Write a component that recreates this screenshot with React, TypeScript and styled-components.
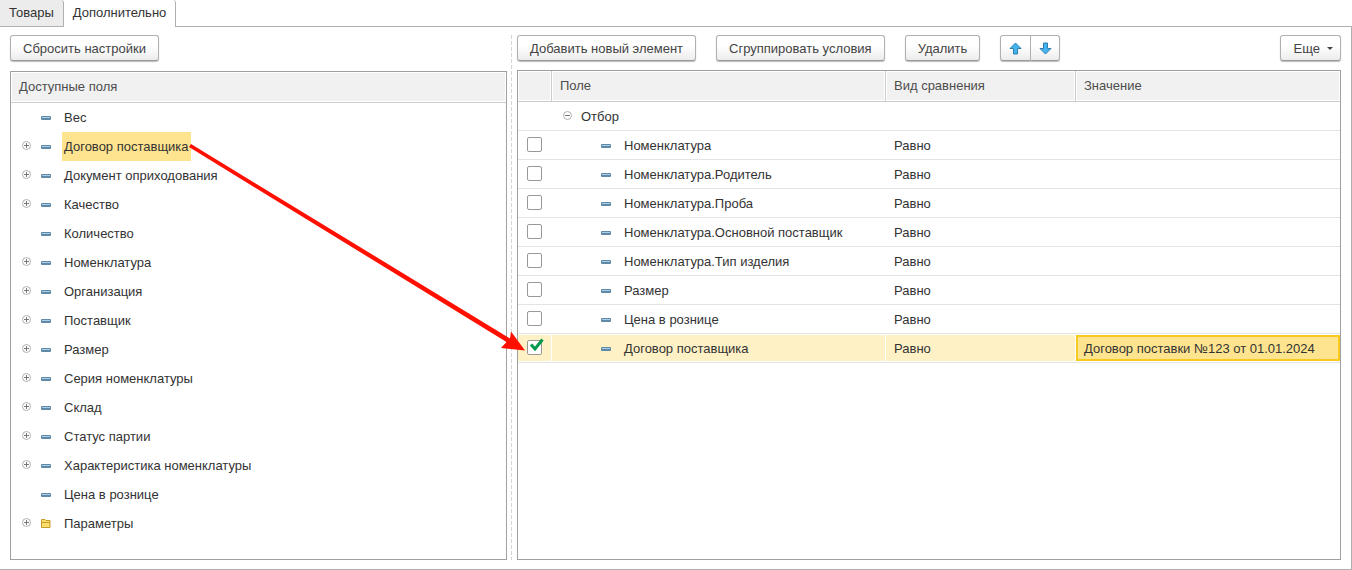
import React, { useState } from "react";
import styled, { createGlobalStyle, css } from "styled-components";

const GlobalStyle = createGlobalStyle`
  *, *::before, *::after { box-sizing: border-box; }
  body { margin: 0; background: #fff; }
  body, button, input, table {
    font-family: "Liberation Sans", Arial, sans-serif;
    font-size: 13px;
    color: #333;
  }
`;

const Page = styled.div`
  min-height: 100vh;
  display: flex;
  flex-direction: column;
`;

const TabBar = styled.div`
  display: flex;
  height: 27px;
  box-shadow: inset 0 -1px #b0b0b0;
`;

const Tab = styled.button<{ $active?: boolean }>`
  height: 27px;
  padding: 0 9px 2px;
  border: 0 solid #b0b0b0;
  border-right-width: 1px;
  border-bottom-width: ${(p) => (p.$active ? 0 : 1)}px;
  border-top-right-radius: 3px;
  background: ${(p) => (p.$active ? "#fff" : "#ececec")};
`;

const Content = styled.main`
  position: relative;
  flex: 1;
  display: grid;
  grid-template-columns: 497fr 10px 824fr;
  padding: 8px 10px 9px;
  border: solid #b0b0b0;
  border-width: 0 1px 1px 0;
`;

const Pane = styled.section<{ $gap: number }>`
  display: flex;
  flex-direction: column;
  gap: ${(p) => p.$gap}px;
  min-width: 0;
`;

const Splitter = styled.div`
  width: 1px;
  margin-left: 4px;
  background: repeating-linear-gradient(#d4d4d4 0 4px, transparent 4px 6px);
`;

const Toolbar = styled.div`
  display: flex;
  gap: 20px;
`;

const Button = styled.button`
  height: 26px;
  padding: 0 12px;
  border: 1px solid #b0b0b0;
  border-bottom-color: #999;
  border-radius: 3px;
  background: linear-gradient(#fff 40%, #ececec);
  box-shadow: 0 1px 1px #bbb;
  color: #444;
  white-space: nowrap;
`;

const MoreButton = styled(Button)`
  display: flex;
  align-items: center;
  gap: 7px;
  margin-left: auto;
  padding: 0 7px 0 13px;
`;

const ButtonGroup = styled.div`
  display: flex;
`;

const IconButton = styled(Button)`
  display: grid;
  place-items: center;
  padding: 0;
  &:first-child { width: 31px; border-radius: 3px 0 0 3px; }
  &:last-child { width: 29px; border-left: 0; border-radius: 0 3px 3px 0; }
`;

const Box = styled.div`
  flex: 1;
  border: 1px solid #a0a0a0;
`;

const headerLook = css`
  height: 31px;
  padding: 0 8px;
  border-bottom: 1px solid #ccc;
  background: #f1f1f1;
  box-shadow: inset 0 0 0 1px #fff;
  color: #4d4d4d;
  font-weight: normal;
  text-align: left;
`;

const ListHeader = styled.div`
  ${headerLook}
  line-height: 30px;
`;

const FieldList = styled.ul`
  margin: 0;
  padding: 0;
  list-style: none;
`;

const FieldRow = styled.li`
  display: grid;
  grid-template-columns: 20px 21px 1fr;
  align-items: center;
  height: 29px;
  padding-left: 10px;
`;

const FieldName = styled.span<{ $selected?: boolean }>`
  justify-self: start;
  height: 29px;
  padding: 0 2px;
  line-height: 29px;
  background: ${(p) => (p.$selected ? "#ffe48f" : "transparent")};
`;

const Table = styled.table`
  width: 100%;
  table-layout: fixed;
  border-collapse: separate;
  border-spacing: 0;
`;

const Th = styled.th`
  ${headerLook}
  padding-bottom: 2px;
  &:not(:last-child) { border-right: 1px solid #ccc; }
`;

const Td = styled.td`
  height: 29px;
  padding: 0 8px;
  border-bottom: 1px solid #e4e4e4;
  white-space: nowrap;
`;

const Tr = styled.tr<{ $selected?: boolean }>`
  ${(p) =>
    p.$selected &&
    css`
      ${Td} {
        background: #fff1c6;
        box-shadow: inset 0 1px #fff, inset 0 -1px #fff, inset -1px 0 #fff;
      }
    `}
`;

const ValueTd = styled(Td)<{ $active?: boolean }>`
  ${(p) => p.$active && css`padding: 1px 0;`}
`;

const ActiveValue = styled.div`
  height: 26px;
  padding: 0 6px;
  border: 2px solid #f9ca1e;
  background: #ffe48f;
  line-height: 24px;
`;

const Item = styled.div<{ $group?: boolean }>`
  display: flex;
  align-items: center;
  gap: ${(p) => (p.$group ? 8 : 13)}px;
  padding-left: ${(p) => (p.$group ? 2 : 41)}px;
`;

const Check = styled.input`
  appearance: none;
  display: block;
  width: 15px;
  height: 15px;
  margin: 0 0 2px 1px;
  border: 1px solid #999;
  border-radius: 2px;
  background: #fff;
`;

const CheckBoxWrap = styled.div`
  position: relative;
`;

const CheckMark = styled.svg`
  position: absolute;
  left: 3px;
  top: -2px;
  pointer-events: none;
`;

const Arrow = styled.svg`
  position: absolute;
  left: 180px;
  top: 110px;
  pointer-events: none;
`;

const Toggle = ({ open }: { open?: boolean }) => (
  <svg width="11" height="13" viewBox="0 0 11 13" fill="none" stroke="#b0b0b0">
    <circle cx="5.5" cy="5.5" r="4" />
    <path d={open ? "M3 5.5h5" : "M3 5.5h5M5.5 3v5"} stroke="#777" />
  </svg>
);

const Dash = () => (
  <svg width="10" height="5" viewBox="0 0 10 5">
    <rect y="1" width="10" height="4" rx="1" fill="#6089a8" />
    <rect x="1" y="2" width="8" height="1" fill="#a9cfe6" />
  </svg>
);

const Folder = () => (
  <svg width="10" height="9" viewBox="0 0 10 9">
    <path d="M.5 8.5v-8h3.500l1 1h4v7z" fill="#ffe06a" stroke="#c79a2c" />
    <path d="M1 3.500h8" stroke="#c79a2c" />
  </svg>
);

const MoveArrow = ({ down }: { down?: boolean }) => (
  <svg width="13" height="13" viewBox="0 0 13 13">
    <path
      d={down ? "M4.500 1h4v5.500H12L6.500 12 1 6.500h3.500z" : "M6.500 1L12 6.500H8.500V12h-4V6.500H1z"}
      fill="#45b3f0"
      stroke="#2d7fae"
      strokeLinejoin="round"
    />
  </svg>
);

type Field = { name: string; leaf?: boolean; folder?: boolean };

const fields: Field[] = [
  { name: "Вес", leaf: true },
  { name: "Договор поставщика" },
  { name: "Документ оприходования" },
  { name: "Качество" },
  { name: "Количество", leaf: true },
  { name: "Номенклатура" },
  { name: "Организация" },
  { name: "Поставщик" },
  { name: "Размер" },
  { name: "Серия номенклатуры" },
  { name: "Склад" },
  { name: "Статус партии" },
  { name: "Характеристика номенклатуры" },
  { name: "Цена в рознице", leaf: true },
  { name: "Параметры", folder: true },
];

const conditions: { name: string; value?: string }[] = [
  { name: "Номенклатура" },
  { name: "Номенклатура.Родитель" },
  { name: "Номенклатура.Проба" },
  { name: "Номенклатура.Основной поставщик" },
  { name: "Номенклатура.Тип изделия" },
  { name: "Размер" },
  { name: "Цена в рознице" },
  { name: "Договор поставщика", value: "Договор поставки №123 от 01.01.2024" },
];

export default function App() {
  const [checked, setChecked] = useState<string[]>(["Договор поставщика"]);
  const toggle = (name: string) =>
    setChecked((c) => (c.includes(name) ? c.filter((n) => n !== name) : [...c, name]));

  return (
    <Page>
      <GlobalStyle />
      <TabBar role="tablist">
        <Tab role="tab" aria-selected={false}>Товары</Tab>
        <Tab role="tab" aria-selected $active>Дополнительно</Tab>
      </TabBar>
      <Content>
        <Pane $gap={10}>
          <Toolbar>
            <Button>Сбросить настройки</Button>
          </Toolbar>
          <Box>
            <ListHeader>Доступные поля</ListHeader>
            <FieldList>
              {fields.map((f) => (
                <FieldRow key={f.name}>
                  {f.leaf ? <span /> : <Toggle />}
                  {f.folder ? <Folder /> : <Dash />}
                  <FieldName $selected={f.name === "Договор поставщика"}>{f.name}</FieldName>
                </FieldRow>
              ))}
            </FieldList>
          </Box>
        </Pane>
        <Splitter />
        <Pane $gap={9}>
          <Toolbar>
            <Button>Добавить новый элемент</Button>
            <Button>Сгруппировать условия</Button>
            <Button>Удалить</Button>
            <ButtonGroup>
              <IconButton aria-label="Переместить вверх"><MoveArrow /></IconButton>
              <IconButton aria-label="Переместить вниз"><MoveArrow down /></IconButton>
            </ButtonGroup>
            <MoreButton>
              Еще
              <svg width="6" height="3" viewBox="0 0 6 3"><path d="M0 0h6L3 3z" fill="#444" /></svg>
            </MoreButton>
          </Toolbar>
          <Box>
            <Table>
              <colgroup>
                <col style={{ width: 34 }} />
                <col style={{ width: 334 }} />
                <col style={{ width: 190 }} />
                <col />
              </colgroup>
              <thead>
                <tr>
                  <Th aria-label="Использование" />
                  <Th>Поле</Th>
                  <Th>Вид сравнения</Th>
                  <Th>Значение</Th>
                </tr>
              </thead>
              <tbody>
                <Tr>
                  <Td />
                  <Td><Item $group><Toggle open />Отбор</Item></Td>
                  <Td />
                  <Td />
                </Tr>
                {conditions.map((c) => (
                  <Tr key={c.name} $selected={!!c.value}>
                    <Td>
                      <CheckBoxWrap>
                        <Check
                          type="checkbox"
                          aria-label={c.name}
                          checked={checked.includes(c.name)}
                          onChange={() => toggle(c.name)}
                        />
                        {checked.includes(c.name) && (
                          <CheckMark width="15" height="14" viewBox="0 0 15 14">
                            <path d="M2 6.500l4 4.500L13.500 1.500" fill="none" stroke="#009a4e" strokeWidth="3" />
                          </CheckMark>
                        )}
                      </CheckBoxWrap>
                    </Td>
                    <Td><Item><Dash />{c.name}</Item></Td>
                    <Td>Равно</Td>
                    <ValueTd $active={!!c.value}>
                      {c.value && <ActiveValue>{c.value}</ActiveValue>}
                    </ValueTd>
                  </Tr>
                ))}
              </tbody>
            </Table>
          </Box>
        </Pane>
        <Arrow width="350" height="220" viewBox="180 137 350 220" aria-hidden="true">
          <path d="M191 144L510 338.500 511 331.500 525 350.500 501 348 506.500 342 189 147z" fill="#ff0f00" />
        </Arrow>
      </Content>
    </Page>
  );
}
